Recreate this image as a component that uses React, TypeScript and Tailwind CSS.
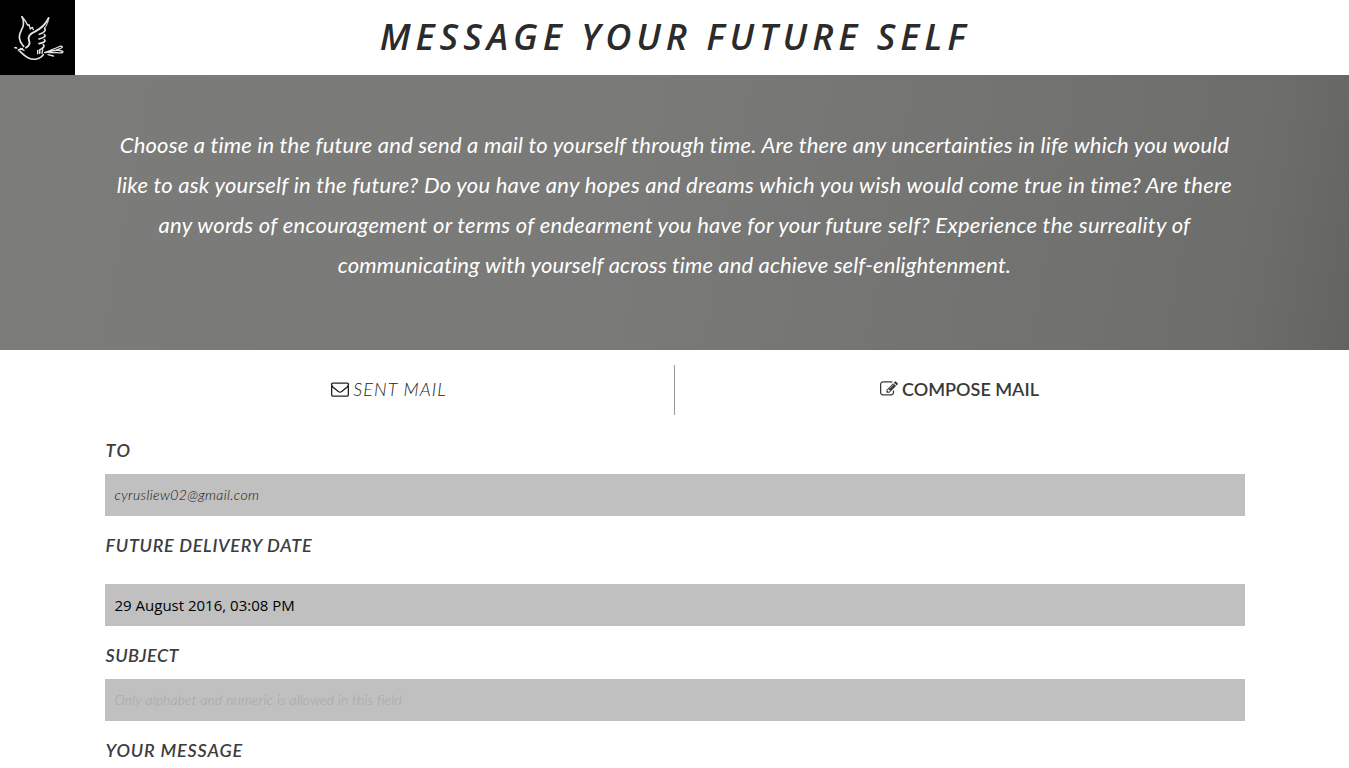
import type { ReactNode } from "react";

function Dove() {
  return (
    <svg viewBox="0 0 225 225" className="h-[75px] w-[75px]" fill="none" stroke="#e4e4e4" strokeLinecap="round" strokeLinejoin="round">
      <path d="M66 50C70 58 72 66 70 76C67 88 57 97 58 113C59 127 65 132 71 139" strokeWidth="5" />
      <path d="M66 50C73 57 78 63 83 76L87 74L91 87L97 82L100 89" strokeWidth="4" />
      <path d="M146 54C137 72 122 86 106 94C90 101 82 108 87 121C91 131 85 139 78 143" strokeWidth="5.5" />
      <path d="M146 54C145 66 141 76 134 84" strokeWidth="3" />
      <path d="M134 85C138 91 135 97 118 103M133 104C139 109 133 113 117 117M133 119C139 124 130 129 117 131M130 134C137 141 124 146 119 150L119 160" strokeWidth="5" />
      <path d="M45 143L50 144M55 150L67 146M57 151C66 160 74 168 84 173C101 182 121 178 130 164" strokeWidth="5" />
      <path d="M61 145L72 151M113 151L113 161M128 149L126 160" strokeWidth="4" />
      <path d="M134 158C149 151 164 146 175 141C185 136 190 140 184 144C169 151 152 155 137 158M140 157C158 151 178 149 188 154C192 158 181 160 171 158L147 158M144 164L160 168" strokeWidth="4" />
    </svg>
  );
}

function Envelope() {
  return (
    <svg viewBox="0 0 1792 1792" className="h-[18px] w-[18px]" fill="currentColor">
      <path d="M1664 1504v-768q-32 36-69 66-268 206-426 338-51 43-83 67t-86.500 48.500-102.500 24.500h-2q-48 0-102.500-24.500t-86.500-48.500-83-67q-158-132-426-338-37-30-69-66v768q0 13 9.500 22.500t22.500 9.500h1472q13 0 22.500-9.500t9.500-22.500zM1664 453v-24.500t-.5-13-3-12.500-5.500-9-9-7.500-14-2.500h-1472q-13 0-22.500 9.500t-9.500 22.500q0 168 147 284 193 152 401 317 6 5 35 29.500t46 37.500 44.500 31.500 50.500 27.500 43 9h2q20 0 43-9t50.500-27.500 44.500-31.500 46-37.500 35-29.500q208-165 401-317 54-43 100.500-115.500t46.500-131.500zM1792 416v1088q0 66-47 113t-113 47h-1472q-66 0-113-47t-47-113v-1088q0-66 47-113t113-47h1472q66 0 113 47t47 113z" />
    </svg>
  );
}

function PencilSquare() {
  return (
    <svg viewBox="0 0 1792 1792" className="h-[18px] w-[18px]" fill="currentColor">
      <path d="M888 1184l116-116-152-152-116 116v56h96v96h56zm440-720q-16-16-33 1l-350 350q-17 17-1 33t33-1l350-350q17-17 1-33zm80 594v190q0 119-84.500 203.500t-203.500 84.500h-832q-119 0-203.500-84.500t-84.500-203.500v-832q0-119 84.500-203.500t203.500-84.500h832q63 0 117 25 15 7 18 23 3 17-9 29l-49 49q-14 14-32 8-23-6-45-6h-832q-66 0-113 47t-47 113v832q0 66 47 113t113 47h832q66 0 113-47t47-113v-126q0-13 9-22l64-64q15-15 35-7t20 29zm-96-738l288 288-672 672h-288v-288zm444 132l-92 92-288-288 92-92q28-28 68-28t68 28l152 152q28 28 28 68t-28 68z" />
    </svg>
  );
}

function Label({ children, className }: { children: ReactNode; className: string }) {
  return (
    <label className={`flex items-center pl-px text-[18px] font-semibold italic leading-none text-[#3d3d3d] ${className}`}>
      <span>{children}</span>
    </label>
  );
}

function Field({ children, className }: { children: ReactNode; className: string }) {
  return (
    <div className={`flex h-[42px] items-center bg-[#c0c0c0] px-[10px] leading-none ${className}`}>
      <span>{children}</span>
    </div>
  );
}

export default function App() {
  return (
    <div className="h-[768px] overflow-hidden bg-white font-['Lato','Liberation_Sans',sans-serif] [font-variant-ligatures:none]">
      <header className="flex h-[75px]">
        <div className="h-[75px] w-[75px] bg-black">
          <Dove />
        </div>
        <h1 className="flex h-[75px] flex-1 justify-center whitespace-nowrap pr-[74px] pt-[12px] font-['Open_Sans',sans-serif] text-[36px] font-semibold italic leading-[50px] tracking-[4.95px] text-[#2b2b2b]">
          MESSAGE YOUR FUTURE SELF
        </h1>
      </header>

      <section className="flex h-[275px] flex-col items-center bg-[linear-gradient(100deg,#7b7b79_0%,#7a7a78_45%,#71716f_80%,#6d6d6b_92%,#636361_100%)] pt-[50px] text-[22px] italic leading-[40px] text-white">
        <p className="whitespace-nowrap tracking-[0.2px]">Choose a time in the future and send a mail to yourself through time. Are there any uncertainties in life which you would</p>
        <p className="whitespace-nowrap tracking-[0.25px]">like to ask yourself in the future? Do you have any hopes and dreams which you wish would come true in time? Are there</p>
        <p className="whitespace-nowrap tracking-[0.27px]">any words of encouragement or terms of endearment you have for your future self? Experience the surreality of</p>
        <p className="whitespace-nowrap tracking-[0.12px]">communicating with yourself across time and achieve self-enlightenment.</p>
      </section>

      <main className="mx-auto w-[1140px]">
        <nav className="mt-[15px] flex h-[50px] text-[18px] leading-none text-[#3a3a3a]">
          <a className="flex w-[570px] items-center justify-center gap-[4px] border-r border-[#999] pb-[2px] font-light italic text-[#222]">
            <Envelope />
            <span className="tracking-[1.05px]">SENT MAIL</span>
          </a>
          <a className="flex w-[570px] items-center justify-center gap-[4px] pb-[2px] font-semibold">
            <PencilSquare />
            <span>COMPOSE MAIL</span>
          </a>
        </nav>

        <Label className="mt-[10px] h-[49px] pt-[1px] tracking-[1.5px]">TO</Label>
        <Field className="text-[14px] font-light italic tracking-[0.36px] text-[#111]">cyrusliew02@gmail.com</Field>
        <Label className="h-[60px] pb-[2px] tracking-[0.72px]">FUTURE DELIVERY DATE</Label>
        <Field className="mt-[8px] pt-px font-['Open_Sans',sans-serif] text-[15px] text-black">29 August 2016, 03:08 PM</Field>
        <Label className="h-[53px] pt-[4px] tracking-[0.45px]">SUBJECT</Label>
        <Field className="text-[14px] font-light italic tracking-[0.18px] text-[#a4a4a4]">Only alphabet and numeric is allowed in this field</Field>
        <Label className="h-[47px] pt-[10px] tracking-[0.85px]">YOUR MESSAGE</Label>
      </main>
    </div>
  );
}
